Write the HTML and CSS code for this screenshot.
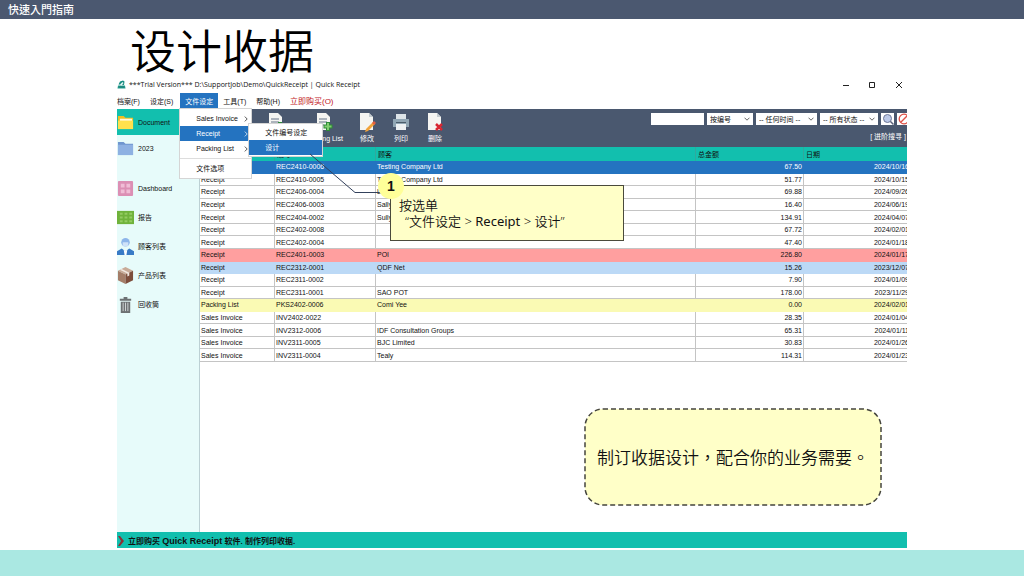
FILE: index.html
```html
<!DOCTYPE html>
<html lang="zh-Hans">
<head>
<meta charset="utf-8">
<title>设计收据</title>
<link rel="stylesheet" href="styles.css">
</head>
<body>
<div class="slide">
  <header class="slide-header" lang="zh-Hant">快速入門指南</header>
  <main class="slide-body">
    <h1 class="slide-title">设计收据</h1>
    <section class="app">
      <div class="titlebar">
        <svg class="app-icon" viewBox="0 0 18 18"><path d="M3 9 6 3l6-2 3 2-1 7z" fill="#168d82"/><path d="M2 11h14l1 6H1z" fill="#27a092"/><path d="m6 9 5-5 2 2-4 5z" fill="#e9f6f4"/><path d="M3 14h12" stroke="#0d665e" stroke-width="1.5"/></svg>
        <span class="app-name">***Trial Version*** D:\SupportJob\Demo\QuickReceipt | Quick Receipt</span>
        <button class="win-button" aria-label="Minimize"><svg viewBox="0 0 8 8"><path d="M1 4.5h6"/></svg></button>
        <button class="win-button" aria-label="Maximize"><svg viewBox="0 0 8 8"><path d="M1.5 1.5h5v5h-5z"/></svg></button>
        <button class="win-button" aria-label="Close"><svg viewBox="0 0 8 8"><path d="M1 1l6 6M7 1 1 7"/></svg></button>
      </div>

      <nav class="menubar">
        <button class="menu-button">档案(F)</button>
        <button class="menu-button">设定(S)</button>
        <div class="menu-anchor">
          <button class="menu-button is-open">文件设定</button>
          <div class="menu">
            <button class="menu-item">Sales Invoice<svg class="arrow" viewBox="0 0 4 6"><path d="M.8.6 3.2 3 .8 5.4"/></svg></button>
            <button class="menu-item is-active">Receipt<svg class="arrow" viewBox="0 0 4 6"><path d="M.8.6 3.2 3 .8 5.4"/></svg></button>
            <button class="menu-item">Packing List<svg class="arrow" viewBox="0 0 4 6"><path d="M.8.6 3.2 3 .8 5.4"/></svg></button>
            <hr class="menu-rule">
            <button class="menu-item">文件选项</button>
            <div class="submenu">
              <button class="menu-item">文件编号设定</button>
              <button class="menu-item is-active">设计</button>
            </div>
          </div>
        </div>
        <button class="menu-button">工具(T)</button>
        <button class="menu-button">帮助(H)</button>
        <button class="menu-button is-buy">立即购买(O)</button>
      </nav>

      <div class="workspace">
        <aside class="sidebar">
          <a class="side-item is-selected" href="#document"><svg viewBox="0 0 18 18"><path d="M1 2h6l2 2h8v12H1z" fill="#f0bf20"/><path d="M3 5h13v3H3z" fill="#fff8dc"/><path d="M1 7h16v9H1z" fill="#ffe14d"/></svg>Document</a>
          <a class="side-item" href="#2023"><svg viewBox="0 0 18 18"><path d="M1 2h6l2 2h8v12H1z" fill="#6f96cf"/><path d="M1 5h16v11H1z" fill="#8eb1e2"/></svg>2023</a>
          <div class="side-group">
            <a class="side-item" href="#dashboard"><svg viewBox="0 0 18 18"><rect x="1" y="1" width="16" height="16" rx="1" fill="#dc8fb4"/><path d="M4 4h4v4H4zM10 4h4v4h-4zM4 10h4v4H4zM10 10h4v4h-4z" fill="#f0bdd6"/></svg>Dashboard</a>
            <a class="side-item" href="#reports"><svg viewBox="0 0 18 18"><path d="M0 2h18v14H0z" fill="#6fb23b"/><path d="M3 5h3M8 5h3M13 5h3M3 9h3M8 9h3M13 9h3M3 13h3M8 13h3M13 13h3" stroke="#94cb62" stroke-width="2"/></svg>报告</a>
            <a class="side-item" href="#customers"><svg viewBox="0 0 18 18"><circle cx="9" cy="4.500" r="4.500" fill="#8db5ea"/><path d="M6 4.500h6v1.500a3 3 0 0 1-6 0z" fill="#cfe2f8"/><path d="M0 18v-4l5-3 4 3 4-3 5 3v4z" fill="#397bc6"/><path d="m7 12 2 2 2-2-1 6H8z" fill="#fff"/></svg>顾客列表</a>
            <a class="side-item" href="#products"><svg viewBox="0 0 18 18"><path d="m9 0 8 4-8 4-8-4z" fill="#c8ab98"/><path d="m1 4 8 4v10l-8-4z" fill="#a47d68"/><path d="m17 4-8 4v10l8-4z" fill="#7d4d3b"/><path d="m5 2 8 4v3l-2 1V7L3 3z" fill="#f1e7df"/></svg>产品列表</a>
            <a class="side-item" href="#bin"><svg viewBox="0 0 18 18"><path d="M3 3h12v2H3zM7 1h4v2H7zM4 6h10v12H4z" fill="#6d7173"/><path d="M6.500 7v9M9 7v9M11.500 7v9" stroke="#d4d9da"/></svg>回收筒</a>
          </div>
        </aside>

        <div class="content">
          <div class="toolbar">
            <div class="actions">
              <button class="action"><svg viewBox="0 0 18 20"><path d="M2 1h9l4 4v13H2z" fill="#f5f5f2"/><path d="M4 7h8M4 10h8M4 13h5" stroke="#657386"/><path d="M13 10v9M8.500 14.500h9" stroke="#2d8b37" stroke-width="4"/></svg>Receipt</button>
              <button class="action"><svg viewBox="0 0 18 20"><path d="M2 1h9l4 4v13H2z" fill="#f5f5f2"/><path d="M4 7h8M4 10h8M4 13h5" stroke="#657386"/><path d="M13 10v9M8.500 14.500h9" stroke="#2d8b37" stroke-width="4"/><path d="M13 11v7M9.500 14.500h7" stroke="#83ce70" stroke-width="2"/></svg>Packing List</button>
              <button class="action is-small"><svg viewBox="0 0 18 20"><path d="M2 1h9l4 4v13H2z" fill="#f5f5f2"/><path d="M11 1v4h4" fill="#c4ccd0"/><path d="m8 17 7-7 2 2-7 7-3 1z" fill="#f2a33a"/><path d="m14 11 2-2 2 2-2 2z" fill="#e45c3f"/></svg>修改</button>
              <button class="action is-small"><svg viewBox="0 0 18 20"><path d="M4 2h10v5H4z" fill="#dce3e7"/><path d="M1 7h16v8H1z" fill="#91a6b4"/><path d="M4 10h10v1H4z" fill="#4b5c6a"/><path d="M4 12h10v6H4z" fill="#eef1f3"/></svg>列印</button>
              <button class="action is-small"><svg viewBox="0 0 18 20"><path d="M2 1h9l4 4v13H2z" fill="#f5f5f2"/><path d="M11 1v4h4" fill="#c4ccd0"/><path d="m10 12 6 6M16 12l-6 6" stroke="#d82732" stroke-width="2.500"/></svg>删除</button>
            </div>
            <div class="search">
              <div class="filters">
                <input class="field" type="text" aria-label="搜寻">
                <label class="picker"><select class="field is-by" aria-label="搜寻栏位"><option>按编号</option></select><svg viewBox="0 0 6 4"><path d="m.5.7 2.500 2.500L5.500.7"/></svg></label>
                <label class="picker"><select class="field is-time" aria-label="时间"><option>-- 任何时间 --</option></select><svg viewBox="0 0 6 4"><path d="m.5.7 2.500 2.500L5.500.7"/></svg></label>
                <label class="picker"><select class="field is-state" aria-label="状态"><option>-- 所有状态 --</option></select><svg viewBox="0 0 6 4"><path d="m.5.7 2.500 2.500L5.500.7"/></svg></label>
                <button class="icon-button" aria-label="搜寻"><svg viewBox="0 0 12 12"><circle cx="5.500" cy="5.500" r="4" fill="#bcc9e8" stroke="#6f7897"/><path d="m8.500 8.500 3 3" stroke="#59617a" stroke-width="1.500"/></svg></button>
                <button class="icon-button" aria-label="清除"><svg viewBox="0 0 12 12"><circle cx="6" cy="6" r="4.800" fill="none" stroke="#df5148" stroke-width="1.300"/><path d="m2.800 9.200 6.400-6.400" stroke="#df5148" stroke-width="1.300"/></svg></button>
              </div>
              <a class="advanced" href="#advanced">[ 进阶搜寻 ]</a>
            </div>
          </div>

          <table class="records">
            <colgroup><col class="col-type"><col class="col-number"><col><col class="col-total"><col class="col-date"></colgroup>
            <thead><tr><th>类别</th><th>编号</th><th>顾客</th><th>总金额</th><th>日期</th></tr></thead>
            <tbody>
              <tr class="row-selected"><td>Receipt</td><td>REC2410-0006</td><td>Testing Company Ltd</td><td>67.50</td><td>2024/10/16</td></tr>
              <tr><td>Receipt</td><td>REC2410-0005</td><td>Testing Company Ltd</td><td>51.77</td><td>2024/10/15</td></tr>
              <tr><td>Receipt</td><td>REC2406-0004</td><td>Lily</td><td>69.88</td><td>2024/09/26</td></tr>
              <tr><td>Receipt</td><td>REC2406-0003</td><td>Sally</td><td>16.40</td><td>2024/06/19</td></tr>
              <tr><td>Receipt</td><td>REC2404-0002</td><td>Sully</td><td>134.91</td><td>2024/04/07</td></tr>
              <tr><td>Receipt</td><td>REC2402-0008</td><td></td><td>67.72</td><td>2024/02/01</td></tr>
              <tr><td>Receipt</td><td>REC2402-0004</td><td></td><td>47.40</td><td>2024/01/18</td></tr>
              <tr class="row-red"><td>Receipt</td><td>REC2401-0003</td><td>POI</td><td>226.80</td><td>2024/01/17</td></tr>
              <tr class="row-blue"><td>Receipt</td><td>REC2312-0001</td><td>QDF Net</td><td>15.26</td><td>2023/12/07</td></tr>
              <tr><td>Receipt</td><td>REC2311-0002</td><td></td><td>7.90</td><td>2024/01/09</td></tr>
              <tr><td>Receipt</td><td>REC2311-0001</td><td>SAO POT</td><td>178.00</td><td>2023/11/29</td></tr>
              <tr class="row-yellow"><td>Packing List</td><td>PKS2402-0006</td><td>Comi Yee</td><td>0.00</td><td>2024/02/01</td></tr>
              <tr><td>Sales Invoice</td><td>INV2402-0022</td><td></td><td>28.35</td><td>2024/01/04</td></tr>
              <tr><td>Sales Invoice</td><td>INV2312-0006</td><td>IDF Consultation Groups</td><td>65.31</td><td>2024/01/11</td></tr>
              <tr><td>Sales Invoice</td><td>INV2311-0005</td><td>BJC Limited</td><td>30.83</td><td>2024/01/26</td></tr>
              <tr><td>Sales Invoice</td><td>INV2311-0004</td><td>Tealy</td><td>114.31</td><td>2024/01/23</td></tr>
            </tbody>
          </table>
        </div>
      </div>

      <div class="statusbar">
        <svg viewBox="0 0 8 12"><path d="M1 1h2l4 5-4 5H1l3-5z" fill="#8e2f35"/></svg>
        <p>立即购买 <span class="product">Quick Receipt</span> 软件. 制作列印收据.</p>
      </div>

      <svg class="pointer" viewBox="0 0 72 40"><path d="M1 1 46 39.500h26"/></svg>
      <div class="callout"><p>按选单</p><p class="callout-path">“文件设定 &gt; <span class="strong">Receipt</span> &gt; 设计”</p></div>
      <div class="step">1</div>
      <div class="note" lang="zh-Hant"><svg class="note-frame"><rect x="1" y="1" rx="18" width="100%" height="100%"/></svg>制订收据设计，配合你的业务需要。</div>
    </section>
  </main>
  <footer class="slide-footer"></footer>
</div>
</body>
</html>
```

FILE: styles.css
```css
* { box-sizing: border-box; }

body {
  margin: 0;
  background: #fff;
  color: #111;
  font: 7px/11px "Liberation Sans", "Noto Sans CJK SC", sans-serif;
}

button, input, select {
  margin: 0;
  padding: 0;
  border: 0;
  border-radius: 0;
  background: none;
  color: inherit;
  font: inherit;
}

a { color: inherit; text-decoration: none; }
p { margin: 0; }
svg { display: block; flex: none; }

/* Slide frame */
.slide { display: flex; flex-direction: column; min-height: 100vh; }

.slide-header {
  padding: 0 8px;
  background: #4b5870;
  color: #fff;
  font: 500 11px/19px "Noto Sans CJK TC", sans-serif;
}

.slide-body { display: flex; flex: 1; flex-direction: column; padding: 2px 117px; }

.slide-title {
  margin: 0;
  padding-left: 13px;
  color: #000;
  font: 350 46px/55px "Noto Sans CJK SC", sans-serif;
}

.slide-footer { height: 26px; background: #aae8e2; }

/* Application window */
.app { position: relative; display: flex; flex: 1; flex-direction: column; }

.titlebar { display: flex; align-items: center; height: 17px; }
.app-icon { width: 9px; height: 9px; }
.app-name { flex: 1; padding-left: 3px; font: 7px/11px "Open Sans", sans-serif; }
.win-button { display: grid; place-items: center; width: 26px; height: 17px; }
.win-button:last-child { width: 17px; margin-left: 5px; }
.win-button svg { width: 8px; height: 8px; fill: none; stroke: #222; }

.menubar { display: flex; height: 16px; }
.menu-button { height: 16px; margin-right: 10px; white-space: nowrap; }
.menu-anchor { position: relative; margin: 0 5px 0 -3px; }
.menu-anchor > .menu-button { width: 38px; margin: 0; text-align: center; }
.menu-button.is-open { background: #2473c0; color: #fff; }
.menu-button.is-buy { color: #c1151d; font-size: 8px; }

.menu, .submenu {
  position: absolute;
  z-index: 2;
  display: flex;
  flex-direction: column;
  width: 71px;
  background: #fff;
  box-shadow: 0 0 0 1px #d5d5d5;
}
.menu { top: 16px; left: 0; padding: 2px 0; }
.submenu { top: 15px; left: 69px; width: 73px; padding: 1px 0; }

.menu-item {
  display: flex;
  align-items: center;
  justify-content: space-between;
  height: 15px;
  padding: 0 3px 0 16px;
  white-space: nowrap;
}
.menu-item.is-active { background: #2473c0; color: #fff; }
.menu-rule { width: 100%; margin: 2px 0; border: 0; border-top: 1px solid #ddd; }
.arrow { width: 4px; height: 6px; fill: none; stroke: currentColor; stroke-width: 1; opacity: 0.7; }

.workspace { display: flex; flex: 1; }

.sidebar {
  width: 83px;
  border-right: 1px solid #bcd0d4;
  background: #e7fbfa;
}
.side-item { display: flex; align-items: center; gap: 4px; height: 26px; }
.side-item.is-selected { background: #12bfae; }
.side-item svg { width: 17px; height: 17px; }
.side-group { padding-top: 13px; }
.side-group .side-item { height: 29px; }

.content { flex: 1; min-width: 0; overflow: hidden; }

.toolbar {
  display: flex;
  justify-content: space-between;
  height: 38px;
  padding: 3px 0;
  background: #4a586f;
  color: #fff;
}
.actions { display: flex; padding-left: 52px; }
.action { display: flex; flex-direction: column; align-items: center; gap: 1px; width: 48px; white-space: nowrap; }
.action.is-small { width: 34px; }
.action svg { width: 18px; height: 20px; }
.action:nth-child(2) { margin-right: 2px; }

.search { display: flex; flex-direction: column; align-items: flex-end; gap: 6px; margin-right: -3px; }
.filters { display: flex; gap: 3px; padding-top: 1px; }
.field { width: 53px; height: 12px; background: #fff; color: #111; }
select.field { display: block; padding: 0 10px 0 3px; appearance: none; }
.field.is-by { width: 46px; }
.field.is-time { width: 61px; }
.field.is-state { width: 58px; }
.picker { display: grid; align-items: center; justify-items: end; }
.picker > * { grid-area: 1 / 1; }
.picker svg { width: 6px; height: 4px; margin-right: 3px; fill: none; stroke: #666; stroke-width: 1; pointer-events: none; }
.icon-button { display: grid; place-items: center; width: 13px; height: 12px; background: #fff; }
.icon-button svg { width: 12px; height: 12px; }
.advanced { margin-right: 4px; }

/* Records */
.records {
  width: calc(100% + 4px);
  height: 215px;
  border-spacing: 0;
  table-layout: fixed;
  white-space: nowrap;
}
.col-type { width: 75px; }
.col-number { width: 101px; }
.col-total { width: 108px; }
.col-date { width: 107px; }
.records th {
  height: 14px;
  padding: 0 2px;
  border-right: 1px solid #30a99d;
  background: #12bfae;
  font-weight: 400;
  text-align: left;
}
.records td {
  padding: 0 1px;
  border-right: 1px solid #c4c4c4;
  border-bottom: 1px solid #c4c4c4;
}
.records td:nth-child(n+4) { text-align: right; }
.records tr[class] td { border-color: transparent; }
.row-selected { background: #2473c0; color: #fff; }
.row-red { background: #ff9f9f; }
.row-blue { background: #bcd9f6; }
.row-yellow { background: #fafab4; }

.statusbar {
  display: flex;
  align-items: center;
  gap: 3px;
  height: 16px;
  padding-top: 2px;
  background: #12bfae;
  font-size: 8px;
  font-weight: 700;
}
.statusbar svg { width: 8px; height: 12px; }
.product { font-size: 9px; }

/* Annotations over the window */
.pointer {
  position: absolute;
  z-index: 3;
  top: 77px;
  left: 192px;
  width: 72px;
  height: 40px;
  fill: none;
  stroke: #33415c;
  stroke-width: 1;
}
.callout {
  position: absolute;
  top: 109px;
  left: 273px;
  width: 234px;
  padding: 11px 8px;
  border: 1px solid #4a4a3c;
  background: #ffffc8;
  font: 350 13px/16px "Noto Sans", "Noto Sans CJK SC", sans-serif;
}
.callout-path { padding-left: 6px; }
.callout .strong { font-weight: 400; }
.step {
  position: absolute;
  z-index: 3;
  top: 97px;
  left: 261px;
  width: 26px;
  border-radius: 50%;
  background: #ffff99;
  font: 700 14px/26px "Liberation Sans", sans-serif;
  text-align: center;
}
.note {
  position: absolute;
  right: 25px;
  bottom: 42px;
  padding: 37px 13px;
  font: 350 17px/24px "Noto Sans CJK TC", sans-serif;
}
.note-frame {
  position: absolute;
  z-index: -1;
  inset: 0;
  width: calc(100% - 2px);
  height: calc(100% - 2px);
  overflow: visible;
  fill: #ffffc8;
  stroke: #44443c;
  stroke-width: 1.5px;
  stroke-dasharray: 5 3;
}
```
